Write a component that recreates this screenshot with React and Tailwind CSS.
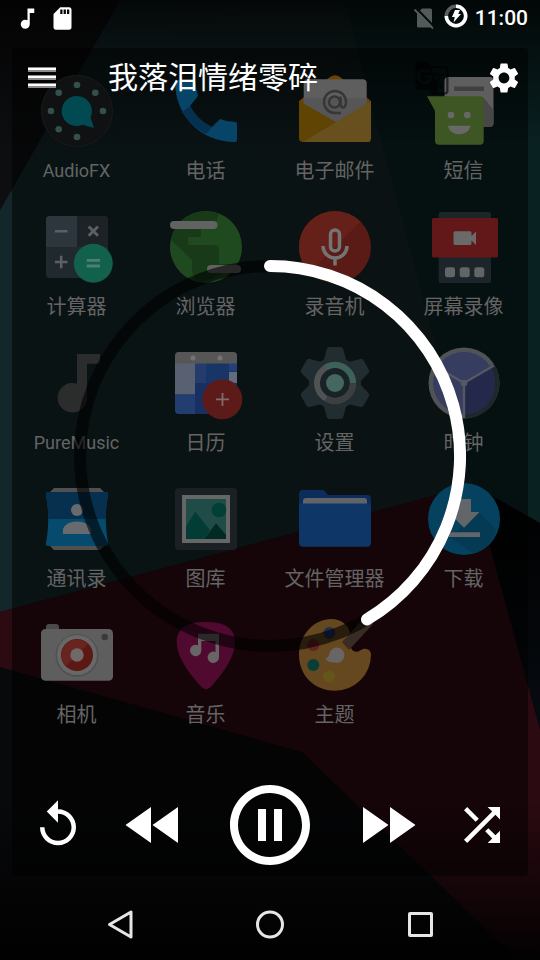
import React from 'react';
import {
  MdFastForward,
  MdFastRewind,
  MdGTranslate,
  MdMusicNote,
  MdPauseCircleOutline,
  MdReplay,
  MdSdCard,
  MdSettings,
  MdShuffle,
} from 'react-icons/md';

const FONT = "font-[Roboto,'Noto_Sans_CJK_SC',sans-serif]";

function Wallpaper() {
  return (
    <svg
      className="absolute inset-0 h-full w-full"
      viewBox="0 0 540 960"
      preserveAspectRatio="none"
      aria-hidden="true"
    >
      <defs>
        <linearGradient id="tealFace" x1="0" x2="1" y1="0" y2="0">
          <stop offset="0" stopColor="#132629" />
          <stop offset="1" stopColor="#162525" />
        </linearGradient>
        <linearGradient id="topShade" x1="0" x2="0" y1="0" y2="1">
          <stop offset="0" stopColor="#000" stopOpacity="0.8" />
          <stop offset="1" stopColor="#000" stopOpacity="0" />
        </linearGradient>
        <linearGradient id="bottomShade" x1="0" x2="0" y1="0" y2="1">
          <stop offset="0" stopColor="#000" stopOpacity="0" />
          <stop offset="1" stopColor="#000" stopOpacity="0.95" />
        </linearGradient>
        <linearGradient id="foldShade" x1="0" x2="0" y1="0" y2="1">
          <stop offset="0" stopColor="#000" />
          <stop offset="1" stopColor="#070b10" />
        </linearGradient>
      </defs>
      <rect width="540" height="960" fill="#08090b" />
      <path d="M120 0H540V523L473 485L0 612V210Z" fill="url(#tealFace)" />
      <path d="M344 0H540V523L473 485L397 200Z" fill="#0a2122" />
      <path d="M120 0L0 210V0Z" fill="#0d0e10" />
      <path d="M473 485L540 523V730Z" fill="url(#foldShade)" />
      <path d="M0 612L473 485L540 730V960H518L302 752L0 667Z" fill="#2b0a11" />
      <rect width="540" height="150" fill="url(#topShade)" />
      <rect y="800" width="540" height="160" fill="url(#bottomShade)" />
    </svg>
  );
}

function AppIcon({ children }) {
  return (
    <svg className="h-[72px] w-[72px] overflow-visible" viewBox="0 0 72 72" aria-hidden="true">
      {children}
    </svg>
  );
}

const AudioFxIcon = () => (
  <AppIcon>
    <circle cx="36" cy="36" r="36" fill="#0f1112" />
    <circle cx="36" cy="36" r="35.500" fill="none" stroke="#171a1b" />
    <g fill="#33504c">
      <circle cx="36" cy="10" r="3.300" />
      <circle cx="17.700" cy="17.700" r="3.300" />
      <circle cx="54.300" cy="17.700" r="3.300" />
      <circle cx="10" cy="36" r="3.300" />
      <circle cx="62" cy="36" r="3.300" />
      <circle cx="17.700" cy="54.300" r="3.300" />
      <circle cx="36" cy="62" r="3.300" />
    </g>
    <path d="M36 21a15 15 0 0 1 13.500 21.500L53 53L41.500 49.800A15 15 0 1 1 36 21Z" fill="#024a51" />
  </AppIcon>
);

const PhoneIcon = () => (
  <AppIcon>
    <path d="M7 5H23Q25.500 5 25.700 8Q26 14 28 21L20 31Q28 46 42 52L50 44Q57 47 65 47Q67 47 67 49V65Q67 67 65 67C30 67 5 40 5 7Q5 5 7 5Z" fill="#064568" />
    <path d="M20 31Q28 46 42 52L36 59Q19 49 12 37Z" fill="#06304f" />
  </AppIcon>
);

const EmailIcon = () => (
  <AppIcon>
    <path d="M0 26L31 2Q36-1.500 41 2L72 26V40H0Z" fill="#6b4204" />
    <rect x="4.700" y="4.300" width="63" height="50" rx="4" fill="#5e5e5e" />
    <rect x="4.700" y="23" width="63" height="31" fill="#565656" />
    <path d="M0 26L72 67H4Q0 67 0 63Z" fill="#604403" />
    <path d="M72 26V63Q72 67 68 67H4Z" fill="#67501e" />
    <g fill="none" stroke="#363636" strokeWidth="2.400">
      <circle cx="35.500" cy="27" r="5.500" />
      <path d="M41.500 21.500V29q0 3.500 3 3.500q2.500-1 2.500-5.500a11 11 0 1 0-11 11h6" />
    </g>
  </AppIcon>
);

const SmsIcon = () => (
  <AppIcon>
    <rect x="16.500" y="2" width="49" height="50" rx="4" fill="#5e5e5e" />
    <rect x="26" y="11.500" width="30" height="4.500" fill="#404040" />
    <path d="M55 22L65.500 35V48Q65.500 52 61 52H55Z" fill="#474747" />
    <path d="M-1 21.300H52Q55.700 21.300 55.700 25V66Q55.700 69.700 52 69.700H11Q7 69.700 7 66V36Z" fill="#3e5623" />
    <g fill="#686868">
      <circle cx="23" cy="40" r="3.300" />
      <circle cx="39.300" cy="40" r="3.300" />
      <path d="M19.700 50.700H42.700Q40 59.300 31.200 59.300Q22.500 59.300 19.700 50.700Z" />
    </g>
  </AppIcon>
);

const CalculatorIcon = () => (
  <AppIcon>
    <rect x="5" y="5" width="62" height="62" rx="4" fill="#20292e" />
    <path d="M9 5H36V36H5V9Q5 5 9 5Z" fill="#2d363c" />
    <path d="M36 5H63Q67 5 67 9V36H36Z" fill="#1c2226" />
    <g stroke="#5d6062" strokeWidth="2.500">
      <path d="M14 20.300H26.500M14 51H26.500M20.200 44.800V57.200" />
      <path d="M47.700 15.500L57 24.800M57 15.500L47.700 24.800" strokeWidth="3" />
    </g>
    <circle cx="52.300" cy="52.300" r="19.500" fill="#12614c" />
    <path d="M45.700 49.300H59M45.700 55H59" stroke="#4f7f70" strokeWidth="2.800" />
  </AppIcon>
);

const BrowserIcon = () => (
  <AppIcon>
    <circle cx="36" cy="36" r="36" fill="#1f4a1f" />
    <path d="M8 13A36 36 0 0 1 49 3L46 12H31V26H18V34H45Q49 34 49 40V53H60A36 36 0 0 1 26 70L22 61V49L1 29Q3 20 8 13Z" fill="#183a19" />
    <rect y="10" width="47.500" height="8" rx="4" fill="#626262" />
    <rect x="37" y="54" width="34" height="8" rx="4" fill="#626262" />
  </AppIcon>
);

const RecorderIcon = () => (
  <AppIcon>
    <circle cx="36" cy="36" r="36" fill="#5a1a15" />
    <path d="M10.500 61.500L61.500 10.500A36 36 0 0 0 10.500 61.500Z" fill="#642019" />
    <rect x="31.500" y="19" width="9" height="21" rx="4.500" fill="none" stroke="#747474" strokeWidth="3.500" />
    <path d="M24 35a12 12 0 0 0 24 0M36 47v7.500" fill="none" stroke="#747474" strokeWidth="3.500" />
  </AppIcon>
);

const ScreencastIcon = () => (
  <AppIcon>
    <rect x="10.700" y="1" width="52.300" height="71" rx="2" fill="#1c262a" />
    <rect x="4" y="7" width="66" height="39.500" rx="1.500" fill="#621718" />
    <path d="M27 20.300H42Q43.500 20.300 43.500 22V25L48 20.500V34L43.500 29.500V32.500Q43.500 34 42 34H27Q25.500 34 25.500 32.500V22Q25.500 20.300 27 20.300Z" fill="#6a6a6a" />
    <g fill="#626566">
      <rect x="17" y="56.300" width="10" height="10" rx="2.500" />
      <rect x="31.700" y="56.300" width="10" height="10" rx="2.500" />
      <rect x="46.300" y="56.300" width="10" height="10" rx="2.500" />
    </g>
  </AppIcon>
);

const PureMusicIcon = () => (
  <AppIcon>
    <path d="M36 7H59V16.700H46V50.700A14.700 14.700 0 1 1 36 36.800Z" fill="#2b2c2c" />
  </AppIcon>
);

const CalendarIcon = () => (
  <AppIcon>
    <rect x="5" y="5" width="62" height="62" rx="4" fill="#182f62" />
    <path d="M5 17V9Q5 5 9 5H63Q67 5 67 9V17Z" fill="#565656" />
    <rect x="5" y="16.500" width="20" height="31" fill="#596072" />
    <path d="M5 47.500H25V67H9Q5 67 5 63Z" fill="#223d70" />
    <rect x="25" y="16.500" width="11" height="19.500" fill="#243c6c" />
    <rect x="36" y="16.500" width="23" height="19.500" fill="#183568" />
    <rect x="59" y="16.500" width="8" height="8" fill="#234078" />
    <rect x="59" y="25" width="8" height="11" fill="#636b7c" />
    <circle cx="23" cy="11" r="2.500" fill="#737373" />
    <circle cx="50" cy="11" r="2.500" fill="#737373" />
    <circle cx="52.300" cy="52.300" r="20" fill="#5c1b18" />
    <path d="M46 52.300H59M52.500 46V59" stroke="#806c6b" strokeWidth="1.800" />
  </AppIcon>
);

const GEAR_ANGLES = [0, 60, 120, 180, 240, 300];

const SettingsIcon = () => (
  <AppIcon>
    <g fill="#222d32">
      <circle cx="36" cy="36" r="26" />
      {GEAR_ANGLES.map((angle) => (
        <path key={angle} d="M30.500 0H41.500Q44 0 44.500 3L48 16H24L27.500 3Q28 0 30.500 0Z" transform={`rotate(${angle} 36 36)`} />
      ))}
    </g>
    <circle cx="36" cy="36" r="16" fill="#192226" />
    <circle cx="36" cy="36" r="18" fill="none" stroke="#505354" strokeWidth="6" />
    <path d="M27 20.400A18 18 0 0 1 54 36" fill="none" stroke="#3c6259" strokeWidth="6" />
    <path d="M27 51.600A18 18 0 0 0 54 36" fill="none" stroke="#3c3f40" strokeWidth="6" />
    <circle cx="36" cy="36" r="9" fill="#44675f" />
  </AppIcon>
);

const ClockIcon = () => (
  <AppIcon>
    <circle cx="36" cy="36" r="35.500" fill="#505355" />
    <path d="M66 17A35.500 35.500 0 0 1 36 71.500L36 36Z" fill="#1e272b" />
    <circle cx="36" cy="36" r="31" fill="#373c61" />
    <path d="M36 36L63 20.500A31 31 0 0 1 36 67Z" fill="#24284b" />
    <path d="M36 36L66 18.500M36 36V71M36 36L12 22" stroke="#555861" strokeWidth="2.400" />
    <circle cx="36" cy="36" r="3.300" fill="#555861" />
  </AppIcon>
);

const ContactsIcon = () => (
  <AppIcon>
    <path d="M13 5H59L63 9V63L59 67H13L9 63V9Z" fill="#505050" />
    <path d="M7 9H65Q67.500 9 67 12Q62.500 36 67 60Q67.500 63 65 63H7Q4.500 63 5 60Q9.500 36 5 12Q4.500 9 7 9Z" fill="#064a6d" />
    <path d="M7 9H65Q67.500 9 67 12Q64.800 24 64.700 36H7.300Q7.200 24 5 12Q4.500 9 7 9Z" fill="#06304d" />
    <circle cx="36" cy="27" r="6" fill="#676b6d" />
    <path d="M22 51V46Q25 38.500 36 38.500Q47 38.500 50 46V51Z" fill="#676b6d" />
  </AppIcon>
);

const GalleryIcon = () => (
  <AppIcon>
    <rect x="5" y="5" width="62" height="62" rx="4" fill="#1b2024" />
    <rect x="12" y="12" width="48" height="48" fill="#666" />
    <rect x="16" y="16" width="40" height="40" fill="#204c47" />
    <path d="M16 43.500L25.300 28.700L40 47L34.300 56H16Z" fill="#023c34" />
    <path d="M34.300 56L46 40.300L56 52V56Z" fill="#022923" />
    <circle cx="49" cy="27" r="7.300" fill="#023f36" />
  </AppIcon>
);

const FilesIcon = () => (
  <AppIcon>
    <path d="M4 7H24.500L29 12H68Q72 12 72 16V58H0V11Q0 7 4 7Z" fill="#0c2d5b" />
    <path d="M4 26V18Q4 15 7 15H65Q68 15 68 18V26Z" fill="#606367" />
    <path d="M3 20.500H69Q72 20.500 72 24V60Q72 63.700 68 63.700H4Q0 63.700 0 60V24Q0 20.500 3 20.500Z" fill="#0e3767" />
  </AppIcon>
);

const DownloadsIcon = () => (
  <AppIcon>
    <circle cx="36" cy="36" r="36" fill="#05425f" />
    <path d="M51 29L68 46Q64 65 45 70L20.500 54Z" fill="#053a55" />
    <path d="M29 16H43V29H51.500L36 44.700L20.500 29H29Z" fill="#636668" />
    <rect x="20.500" y="49.300" width="31.500" height="4.700" fill="#636668" />
  </AppIcon>
);

const CameraIcon = () => (
  <AppIcon>
    <path d="M5 14V8Q5 5 8 5H15Q18 5 18 8V14Z" fill="#4a4a4a" />
    <rect y="10" width="72" height="51.700" rx="4.500" fill="#5e5e5e" />
    <circle cx="36" cy="36.500" r="21.500" fill="#515151" />
    <circle cx="36" cy="36" r="20" fill="#686868" />
    <circle cx="36" cy="36" r="16" fill="#5c1914" />
    <path d="M24.700 47.300L47.300 24.700A16 16 0 0 0 24.700 47.300Z" fill="#68241e" />
    <circle cx="36" cy="36" r="6.700" fill="#6f6969" />
    <circle cx="63.700" cy="13" r="0" fill="#3b3b3b" />
    <circle cx="63.700" cy="18" r="3.300" fill="#3b3b3b" />
  </AppIcon>
);

const MusicIcon = () => (
  <AppIcon>
    <path d="M36 3C53 3 65 8 65 23C65 41 47 61 40 68.500Q36 72 32 68.500C25 61 6.700 41 6.700 23C6.700 8 19 3 36 3Z" fill="#500a30" />
    <path d="M28 14.700H49V38.300A5.700 5.700 0 1 1 45.500 33V22H31.300V31.300A5.700 5.700 0 1 1 28 26.300Z" fill="#696466" />
  </AppIcon>
);

const ThemesIcon = () => (
  <AppIcon>
    <path d="M32 0C43 0 50 7 51 14C52 19 49 22 51 27C53 33 58 34 61 31.500C66 28 72 30 72 36A36 36 0 0 1 36 71.700C14 71.700 0 55 0 36C0 15 16 0 32 0Z" fill="#65481f" />
    <circle cx="30.300" cy="14" r="6" fill="#202f55" />
    <circle cx="14.300" cy="26" r="6" fill="#632320" />
    <circle cx="14.300" cy="46" r="6" fill="#073f36" />
    <circle cx="30" cy="57.700" r="6" fill="#64551b" />
    <path d="M43 23L66-2Q74-1 74 5L50 31Z" fill="#3b2b25" />
    <path d="M26.300 40Q30 38 30.500 34A7.600 7.600 0 1 1 36 43.500Q30 44 26.300 40Z" fill="#686665" />
  </AppIcon>
);

const CJK_LABEL = 'text-[20px]';
const LATIN_LABEL = 'text-[18px]';

const APPS = [
  ['AudioFX', AudioFxIcon, LATIN_LABEL],
  ['电话', PhoneIcon, CJK_LABEL],
  ['电子邮件', EmailIcon, CJK_LABEL],
  ['短信', SmsIcon, CJK_LABEL],
  ['计算器', CalculatorIcon, CJK_LABEL],
  ['浏览器', BrowserIcon, CJK_LABEL],
  ['录音机', RecorderIcon, CJK_LABEL],
  ['屏幕录像', ScreencastIcon, CJK_LABEL],
  ['PureMusic', PureMusicIcon, LATIN_LABEL],
  ['日历', CalendarIcon, CJK_LABEL],
  ['设置', SettingsIcon, CJK_LABEL],
  ['时钟', ClockIcon, CJK_LABEL],
  ['通讯录', ContactsIcon, CJK_LABEL],
  ['图库', GalleryIcon, CJK_LABEL],
  ['文件管理器', FilesIcon, CJK_LABEL],
  ['下载', DownloadsIcon, CJK_LABEL],
  ['相机', CameraIcon, CJK_LABEL],
  ['音乐', MusicIcon, CJK_LABEL],
  ['主题', ThemesIcon, CJK_LABEL],
];

function AppDrawer() {
  return (
    <section className="relative mx-3 mt-12 mb-[84px] rounded-sm bg-black/50 pt-[27px] [grid-area:1/1]">
      <div className="grid grid-cols-4 gap-y-[26px]">
        {APPS.map(([name, Icon, labelSize]) => (
          <button key={name} type="button" className="flex flex-col items-center gap-[10px]">
            <Icon />
            <span className={`leading-7 whitespace-nowrap text-[#646464] ${labelSize}`}>{name}</span>
          </button>
        ))}
      </div>
    </section>
  );
}

function NoSimIcon() {
  return (
    <svg className="h-6 w-6" viewBox="0 0 24 24" aria-hidden="true">
      <path d="M10 2.500H18.500Q20 2.500 20 4V20Q20 21.500 18.500 21.500H6.500Q5 21.500 5 20V7.500Z" fill="#535a5a" />
      <path d="M4.500 2.500L23 21.500" stroke="#050c0c" strokeWidth="2" />
      <path d="M2.500 3.500L21 22.500" stroke="#535a5a" strokeWidth="1.800" />
    </svg>
  );
}

function BatteryIcon() {
  return (
    <svg className="h-6 w-6" viewBox="0 0 24 24" aria-hidden="true">
      <circle cx="12" cy="12" r="9.700" fill="none" stroke="#5b6161" strokeWidth="3.500" />
      <path d="M12 2.300A9.700 9.700 0 1 1 2.300 12" fill="none" stroke="#fff" strokeWidth="3.500" />
      <path d="M11 6H16L14.200 10H17L9.500 18.500L10.800 13H8Z" fill="#fff" />
    </svg>
  );
}

function StatusBar() {
  return (
    <div className="flex h-9 items-center justify-between pr-3 pl-[14px] text-white">
      <div className="flex items-center gap-2">
        <MdMusicNote size={27} />
        <MdSdCard size={27} />
      </div>
      <div className="flex items-center">
        <NoSimIcon />
        <div className="mr-[7px] ml-2 pb-1">
          <BatteryIcon />
        </div>
        <time className="text-[21px] leading-7 font-medium">11:00</time>
      </div>
    </div>
  );
}

function PlayerHeader() {
  return (
    <header className="flex h-[84px] items-center pr-[18px] pl-7 text-white">
      <button type="button" aria-label="菜单">
        <svg className="h-7 w-7" viewBox="0 0 28 28" aria-hidden="true">
          <g fill="#8c8c8c">
            <rect y="3" width="28" height="5" />
            <rect y="11" width="28" height="5" />
            <rect y="19" width="28" height="5" />
          </g>
          <g fill="#fff">
            <rect y="4" width="28" height="2" />
            <rect y="12" width="28" height="2" />
            <rect y="20" width="28" height="2" />
          </g>
        </svg>
      </button>
      <h1 className="ml-[52px] flex-1 text-[30px] leading-10">我落泪情绪零碎</h1>
      <button type="button" aria-label="翻译" className="mr-9 text-black/60">
        <MdGTranslate size={36} />
      </button>
      <button type="button" aria-label="设置">
        <MdSettings size={36} />
      </button>
    </header>
  );
}

function ProgressRing() {
  return (
    <div className="flex flex-1 items-center justify-center pt-[14px]">
      <svg
        className="h-[392px] w-[392px]"
        viewBox="0 0 392 392"
        role="progressbar"
        aria-label="播放进度"
        aria-valuenow={41}
        aria-valuemin={0}
        aria-valuemax={100}
      >
        <circle cx="196" cy="196" r="190" fill="none" stroke="#000" strokeOpacity="0.6" strokeWidth="12" />
        <path d="M196 6A190 190 0 0 1 293 359.400" fill="none" stroke="#fff" strokeWidth="12" strokeLinecap="round" />
      </svg>
    </div>
  );
}

function Controls() {
  return (
    <div className="mb-[15px] flex items-center justify-between px-[31px] text-white">
      <button type="button" aria-label="重播">
        <MdReplay size={54} />
      </button>
      <button type="button" aria-label="上一首">
        <MdFastRewind size={72} />
      </button>
      <button type="button" aria-label="暂停">
        <MdPauseCircleOutline size={96} />
      </button>
      <button type="button" aria-label="下一首">
        <MdFastForward size={72} />
      </button>
      <button type="button" aria-label="随机播放">
        <MdShuffle size={54} />
      </button>
    </div>
  );
}

function NavBar() {
  return (
    <nav className="flex h-[72px] items-center justify-center">
      <button type="button" aria-label="返回" className="flex w-[150px] justify-center">
        <svg className="h-8 w-8" viewBox="0 0 32 32" fill="none" stroke="#e6e6e6" strokeWidth="3" aria-hidden="true">
          <path d="M27 4V29L5.500 16.500Z" strokeLinejoin="round" />
        </svg>
      </button>
      <button type="button" aria-label="主屏幕" className="flex w-[150px] justify-center">
        <svg className="h-8 w-8" viewBox="0 0 32 32" fill="none" stroke="#e6e6e6" strokeWidth="3" aria-hidden="true">
          <circle cx="16" cy="16.500" r="12.500" />
        </svg>
      </button>
      <button type="button" aria-label="最近任务" className="flex w-[150px] justify-center">
        <svg className="h-8 w-8" viewBox="0 0 32 32" fill="none" stroke="#e6e6e6" strokeWidth="3" aria-hidden="true">
          <rect x="5.500" y="5.500" width="22" height="22" rx="0.500" />
        </svg>
      </button>
    </nav>
  );
}

export default function App() {
  return (
    <div className={`relative grid min-h-screen overflow-hidden bg-black ${FONT}`}>
      <Wallpaper />
      <AppDrawer />
      <main className="relative flex flex-col [grid-area:1/1]">
        <StatusBar />
        <PlayerHeader />
        <ProgressRing />
        <Controls />
        <NavBar />
      </main>
    </div>
  );
}
